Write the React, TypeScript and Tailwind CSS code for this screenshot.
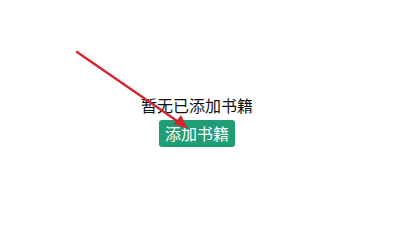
import React from 'react';

export default function App() {
  return (
    <div className="relative w-[400px] h-[251px] bg-white overflow-hidden" style={{ fontFamily: '"Noto Sans CJK SC", "Noto Sans", sans-serif' }}>
      <div className="flex flex-col items-center pt-[94px] pr-[6px]">
        <p className="text-[16px] leading-[22px] text-[#111]">暂无已添加书籍</p>
        <button className="mt-[4px] h-[27px] px-[6px] rounded-[3px] bg-[#1f9d74] text-white text-[16px] leading-[27px]">
          添加书籍
        </button>
      </div>
      <svg className="absolute inset-0 pointer-events-none" width="400" height="251" viewBox="0 0 400 251">
        <line x1="77" y1="52" x2="180" y2="123" stroke="#d3262f" strokeWidth="2.4" strokeLinecap="round" />
        <polygon points="188,129 174,124 181,115" fill="#d3262f" />
      </svg>
    </div>
  );
}
